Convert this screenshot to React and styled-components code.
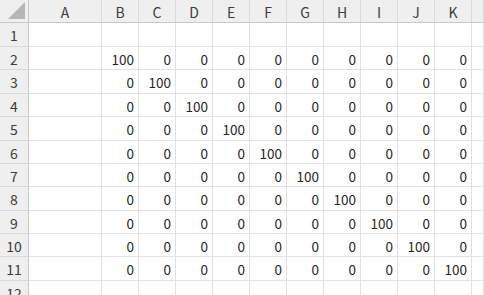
import React from 'react';
import styled, { createGlobalStyle } from 'styled-components';

const GlobalStyle = createGlobalStyle`
    html, body {
        margin: 0;
        padding: 0;
        background: #ffffff;
        overflow: hidden;
    }
`

const COLS = ['A', 'B', 'C', 'D', 'E', 'F', 'G', 'H', 'I', 'J', 'K', ''];
const ROW_HEIGHTS = [24, 23, 24, 23, 24, 23, 23, 24, 23, 23, 24, 24];

const Sheet = styled.div`
    display: grid;
    grid-template-columns: 29px 73px repeat(10, 37px) 1fr;
    grid-template-rows: ${props => props.rows};
    width: 484px;
    height: 295px;
    overflow: hidden;
    font-family: "Noto Sans CJK JP", "Noto Sans", sans-serif;
`

const Corner = styled.div`
    background: #efefef;
    border-right: 1px solid #c8c8c8;
    border-bottom: 1px solid #c8c8c8;
    display: flex;
    align-items: flex-end;
    justify-content: flex-end;
    padding: 0 3px 3px 0;
`

const ColHead = styled.div`
    background: #efefef;
    border-right: 1px solid #d9d9d9;
    border-bottom: 1px solid #c8c8c8;
    display: flex;
    align-items: center;
    justify-content: center;
    font-size: 14px;
    color: #3c3c3c;
    padding-top: 1px;
`

const RowHead = styled.div`
    background: #efefef;
    border-right: 1px solid #c8c8c8;
    border-bottom: 1px solid #d9d9d9;
    display: flex;
    align-items: center;
    justify-content: center;
    font-size: 14px;
    color: #3c3c3c;
    padding-top: 1px;
`

const Cell = styled.div`
    border-right: 1px solid #e1e1e1;
    border-bottom: 1px solid #e1e1e1;
    display: flex;
    align-items: center;
    justify-content: flex-end;
    padding: 1px 4px 0 0;
    font-size: 13.5px;
    color: #262626;
    overflow: hidden;
    white-space: nowrap;
`

const Sheet1 = () => {
    const rows = [];
    for (let r = 1; r <= 12; r++) {
        const cells = [];
        cells.push(<RowHead key="h">{r}</RowHead>);
        COLS.forEach((c, i) => {
            let value = '';
            if (r >= 2 && r <= 11 && i >= 1 && i <= 10) {
                value = (i === r - 1) ? 100 : 0;
            }
            cells.push(<Cell key={c || 'L'}>{value}</Cell>);
        });
        rows.push(<React.Fragment key={r}>{cells}</React.Fragment>);
    }

    return (
        <Sheet rows={'23px ' + ROW_HEIGHTS.map(h => h + 'px').join(' ')}>
            <Corner>
                <svg width="17" height="17" viewBox="0 0 17 17">
                    <polygon points="17,0 17,17 0,17" fill="#b6b6b6" />
                </svg>
            </Corner>
            {COLS.map((c, i) => <ColHead key={i}>{c}</ColHead>)}
            {rows}
        </Sheet>
    )
};

const App = () => {
    return (
        <>
            <GlobalStyle />
            <Sheet1 />
        </>
    )
};

export default App;
